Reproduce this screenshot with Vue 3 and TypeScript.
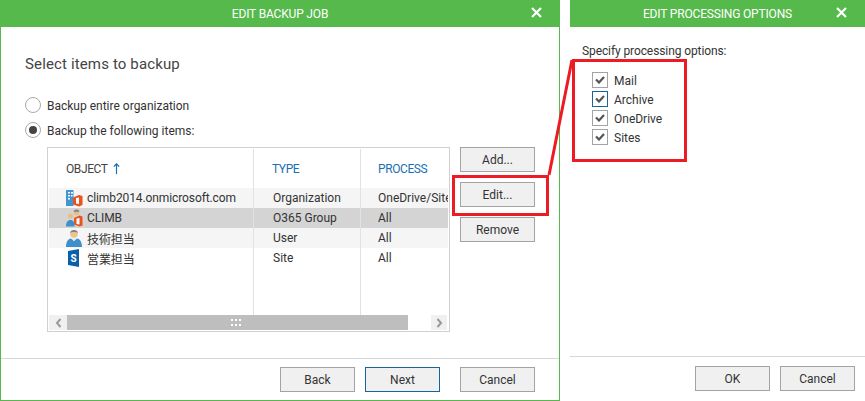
<script setup lang="ts">
interface Row { name: string; type: string; process: string; icon: string; state: string }
const rows: Row[] = [
  { name: 'climb2014.onmicrosoft.com', type: 'Organization', process: 'OneDrive/Sites', icon: 'org', state: 'alt' },
  { name: 'CLIMB', type: 'O365 Group', process: 'All', icon: 'group', state: 'selected' },
  { name: '技術担当', type: 'User', process: 'All', icon: 'user', state: 'alt' },
  { name: '営業担当', type: 'Site', process: 'All', icon: 'site', state: '' },
]
const options = ['Mail', 'Archive', 'OneDrive', 'Sites']
</script>

<template>
  <div class="desk">
    <section class="win main">
      <header class="bar">
        <span class="bar-title">EDIT BACKUP JOB</span>
        <svg class="close" width="11" height="11" viewBox="0 0 11 11"><path d="M1 1l9 9M10 1l-9 9" stroke="#fff" stroke-width="2.2" fill="none" /></svg>
      </header>
      <div class="body">
        <h1>Select items to backup</h1>
        <label class="radio r1"><i class="dot"></i><span class="t">Backup entire organization</span></label>
        <label class="radio r2"><i class="dot on"></i><span class="t">Backup the following items:</span></label>
        <div class="work">
          <div class="table">
            <div class="thead">
              <div class="th c1 plain">OBJECT
                <svg class="sort" width="7" height="11" viewBox="0 0 7 11"><path d="M3.5 11V1M.8 3.6L3.5.8l2.7 2.8" stroke="#1a6fb5" stroke-width="1.2" fill="none" /></svg>
              </div>
              <div class="th c2">TYPE</div>
              <div class="th c3">PROCESS</div>
            </div>
            <div v-for="r in rows" :key="r.name" class="row" :class="r.state">
              <div class="td c1">
                <svg class="ico" width="17" height="18" viewBox="0 0 17 18">
                  <template v-if="r.icon === 'org'">
                    <path d="M0 1h7.500v16H0z" fill="#3f96d2" />
                    <path d="M2 3h2v1.500H2zM5 3h2v1.500H5zM2 6h2v1.500H2zM5 6h1.500v1.500H5zM2 9h2v1.500H2z" fill="#fff" />
                    <path d="M7 8.500L13 6l3.500 1v9L13 17.500 7 15.500z" fill="#e9531d" />
                    <path d="M10 9l3-.5v6.500l-3-.5z" fill="#fff" />
                  </template>
                  <template v-else-if="r.icon === 'group'">
                    <circle cx="4.500" cy="7" r="2.500" fill="#e9bf7e" />
                    <path d="M0 17.500c0-4 1.500-6.500 4.500-6.500s4 2.500 4 6.500z" fill="#3f8fcb" />
                    <circle cx="10.500" cy="3.500" r="2.800" fill="#e9bf7e" />
                    <path d="M7.500 2c1-2 5-2 6 0l-1 1H8.500z" fill="#8a8a8a" />
                    <path d="M8 9l5.500-2.500 3 1v9l-3 1L8 15.500z" fill="#e9531d" />
                    <path d="M10.500 9.500l3-.5v6.500l-3-.5z" fill="#fff" />
                  </template>
                  <template v-else-if="r.icon === 'user'">
                    <circle cx="8" cy="5" r="3.800" fill="#ecc488" />
                    <path d="M4 4C4.500 0 11.500 0 12 4 10 2.800 6 2.800 4 4z" fill="#808080" />
                    <path d="M0 18c0-5 2-8 5-8.500L8 12l3-2.500c3 .5 5 3.500 5 8.500z" fill="#3f8fcb" />
                    <path d="M6 9.500h4L8 12z" fill="#dfe8ef" />
                  </template>
                  <template v-else>
                    <path d="M2 2l11-2v18L2 16z" fill="#0a5fa8" />
                    <text x="7.500" y="12.500" text-anchor="middle" class="s">S</text>
                  </template>
                </svg>
                <span class="name">{{ r.name }}</span>
              </div>
              <div class="td c2">{{ r.type }}</div>
              <div class="td c3">{{ r.process }}</div>
            </div>
            <div class="fill">
              <span class="sep s1"></span><span class="sep s2"></span>
            </div>
            <div class="scroll">
              <span class="arrow">
                <svg width="7" height="10" viewBox="0 0 7 10"><path d="M5.500 1L2 5l3.500 4" stroke="#999" stroke-width="2" fill="none" /></svg>
              </span>
              <span class="thumb"><i></i><i></i><i></i><i></i><i></i><i></i></span>
              <span class="track"></span>
              <span class="arrow">
                <svg width="7" height="10" viewBox="0 0 7 10"><path d="M1.500 1L5 5 1.500 9" stroke="#999" stroke-width="2" fill="none" /></svg>
              </span>
            </div>
          </div>
          <div class="side">
            <button class="btn">Add...</button>
            <button class="btn">Edit...</button>
            <button class="btn">Remove</button>
          </div>
        </div>
      </div>
      <footer class="foot">
        <button class="btn">Back</button>
        <button class="btn primary">Next</button>
        <button class="btn last">Cancel</button>
      </footer>
    </section>

    <section class="win opts">
      <header class="bar">
        <span class="bar-title">EDIT PROCESSING OPTIONS</span>
        <svg class="close" width="11" height="11" viewBox="0 0 11 11"><path d="M1 1l9 9M10 1l-9 9" stroke="#fff" stroke-width="2.2" fill="none" /></svg>
      </header>
      <div class="body opts-body">
        <p class="spec">Specify processing options:</p>
        <div class="checks">
          <label v-for="o in options" :key="o" class="check">
            <span class="box" :class="{ focus: o === 'Archive' }">
              <svg width="10" height="8" viewBox="0 0 10 8"><path d="M1 3.500l3 3L9 1" stroke="#555" stroke-width="2.200" fill="none" /></svg>
            </span><span class="t">{{ o }}</span>
          </label>
        </div>
      </div>
      <footer class="foot opts-foot">
        <button class="btn">OK</button>
        <button class="btn">Cancel</button>
      </footer>
    </section>

    <svg class="note" width="865" height="401" viewBox="0 0 865 401">
      <rect x="453.500" y="176.500" width="94" height="38" />
      <rect x="573.500" y="60.500" width="112" height="100" />
      <path d="M549 175L572 60" />
    </svg>
  </div>
</template>

<style scoped>
.desk {
  position: relative;
  width: 865px;
  height: 401px;
  display: flex;
  gap: 10px;
  background: #fff;
  overflow: hidden;
  font: 12px Roboto, "Noto Sans CJK JP", sans-serif;
  color: #333;
}
.win { display: flex; flex-direction: column; box-sizing: border-box; height: 401px; }
.main { width: 560px; border: 1px solid #55b94c; border-top: 0; }
.opts { width: 295px; }
.bar {
  flex: none;
  height: 27px;
  background: #55b94c;
  color: #fff;
  display: flex;
  align-items: center;
  justify-content: center;
  position: relative;
  font-size: 12px;
  letter-spacing: -0.17px;
}
.main .bar { margin: 0 -1px; }
.close { position: absolute; right: 18px; top: 7px; }
.body { flex: 1; min-height: 0; padding: 0 0 0 24px; }
h1 { margin: 27px 0 0; font-size: 15px; letter-spacing: 0.14px; line-height: 20px; font-weight: 400; color: #444; }
.radio { display: flex; align-items: center; gap: 6px; height: 16px; }
.t { padding-top: 2px; }
.r1 { margin-top: 23px; }
.r2 { margin-top: 9px; }
.dot { box-sizing: border-box; width: 16px; height: 16px; border: 1px solid #aaa; border-radius: 50%; display: flex; align-items: center; justify-content: center; }
.dot.on::after { content: ""; width: 8px; height: 8px; border-radius: 50%; background: #444; }
.work { display: flex; margin: 9px 0 0 22px; gap: 10px; }
.table {
  box-sizing: border-box;
  width: 403px;
  height: 185px;
  border: 1px solid #d0d0d0;
  padding: 1px;
  display: flex;
  flex-direction: column;
}
.thead { display: flex; height: 39px; flex: none; }
.th { display: flex; align-items: center; color: #1a6fb5; box-sizing: border-box; height: 39px; letter-spacing: -0.4px; }
.th.plain { color: #444; }
.th.c2 { padding-left: 18px; }
.sort { margin-left: 5px; }
.row { display: flex; height: 20px; flex: none; }
.row.alt { background: #f5f5f5; }
.row.selected { background: #d4d4d4; }
.td { display: flex; align-items: center; box-sizing: border-box; height: 20px; white-space: nowrap; overflow: hidden; }
.c1 { width: 204px; padding-left: 17px; }
.c2 { width: 107px; padding-left: 19px; border-left: 1px solid #e2e2e2; }
.c3 { width: 88px; padding-left: 17px; border-left: 1px solid #e2e2e2; }
.ico { flex: none; }
.name { margin-left: 4px; letter-spacing: -0.1px; }
.s { font: 700 10px Roboto, sans-serif; fill: #fff; }
.fill { flex: 1; position: relative; }
.sep { position: absolute; top: 0; bottom: 0; width: 1px; background: #e2e2e2; }
.s1 { left: 204px; }
.s2 { left: 311px; }
.scroll { flex: none; height: 15px; display: flex; }
.arrow { width: 18px; background: #f0f0f0; display: flex; align-items: center; justify-content: center; }
.arrow:last-child { width: 16px; }
.thumb { box-sizing: border-box; width: 341px; padding-right: 3px; background: #bebebe; display: grid; grid-template-columns: repeat(3, 2px); gap: 3px 2px; justify-content: center; align-content: center; }
.thumb i { width: 2px; height: 2px; background: #fff; }
.track { width: 23px; }
.side { display: flex; flex-direction: column; gap: 10px; }
.btn {
  box-sizing: border-box;
  width: 75px;
  height: 25px;
  padding: 0;
  background: #f0f0f0;
  border: 1px solid #a3a3a3;
  font: inherit;
  color: #333;
}
.btn.primary { border-color: #1a6499; }
.btn.last { margin-left: 10px; }
.foot { flex: none; box-sizing: border-box; height: 42px; border-top: 1px solid #d6d6d6; display: flex; justify-content: flex-end; gap: 10px; padding: 8px 24px 0 0; }
.opts-body { padding-left: 12px; }
.spec { margin: 16px 0 0; line-height: 16px; letter-spacing: -0.1px; }
.checks { margin: 13px 0 0 10px; display: flex; flex-direction: column; gap: 3px; }
.check { display: flex; align-items: center; gap: 6px; height: 16px; }
.box { box-sizing: border-box; width: 16px; height: 16px; border: 1px solid #a3a3a3; display: flex; align-items: center; justify-content: center; }
.box.focus { border-color: #1a6499; }
.opts-foot { height: 45px; padding: 9px 10px 0 0; }
.note { position: absolute; left: 0; top: 0; pointer-events: none; fill: none; stroke: #ed1c24; stroke-width: 3; }
</style>
